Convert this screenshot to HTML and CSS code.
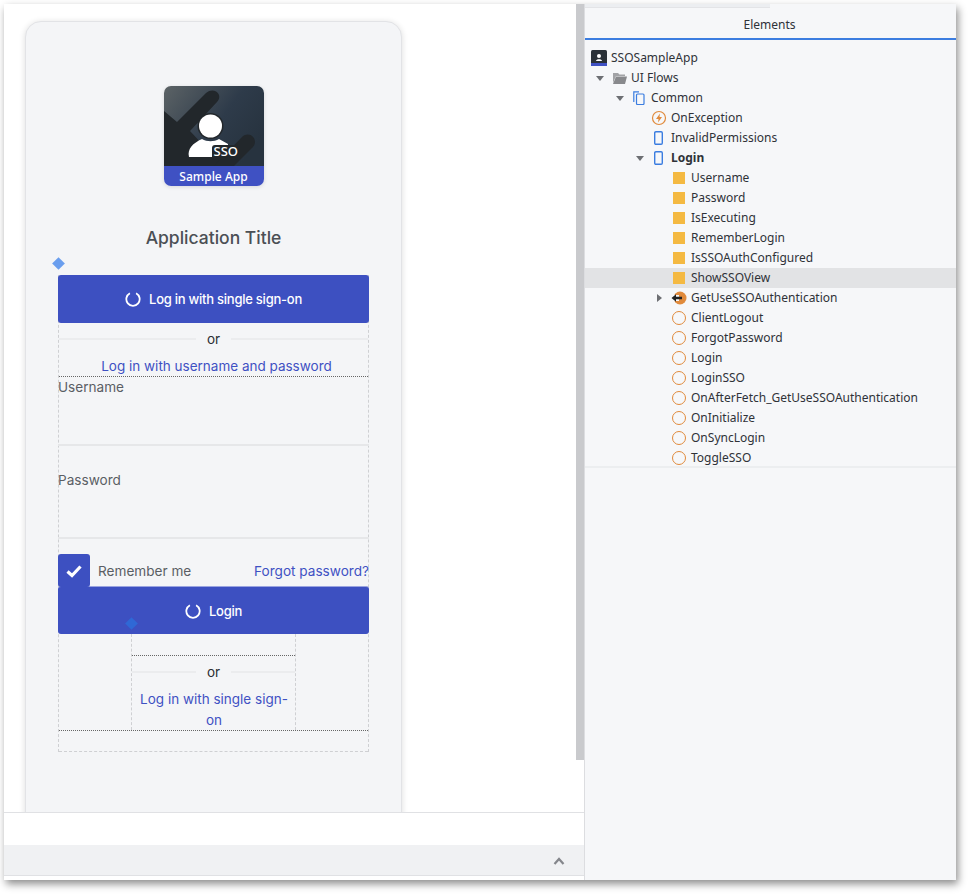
FILE: index.html
```html
<!DOCTYPE html>
<html lang="en">
<head>
  <meta charset="UTF-8" />
  <meta name="viewport" content="width=device-width, initial-scale=1.0" />
  <title>SSOSampleApp</title>
  <link rel="stylesheet" href="styles.css">
</head>
<body>
  <div class="window">
    <div class="editor">
      <div class="stage">
        <div class="canvas">
          <div class="card">
            <div class="logo">
              <svg class="logo-art" viewBox="0 0 100 80" width="100" height="80">
                <defs>
                  <linearGradient id="logoBg" x1="0" y1="0" x2="1" y2="0.6">
                    <stop offset="0" stop-color="#5c6366" />
                    <stop offset="0.6" stop-color="#2e3b4a" />
                    <stop offset="1" stop-color="#27333f" />
                  </linearGradient>
                </defs>
                <rect width="100" height="80" fill="url(#logoBg)" />
                <path d="M0 25 L13 36 L42 7 C50 0 60 9 53 16 L26 45 L40 60 L52 58 L62 80 L0 80 Z" fill="#22272b" />
                <path d="M50 80 L78 51 C86 44 95 54 89 61 L70 80 Z" fill="#22272b" />
                <circle cx="46.500" cy="40" r="13" fill="#22272b" />
                <circle cx="46.500" cy="40" r="11.500" fill="#fff" />
                <path d="M25 71 C23 63 29 57 38 53 C43 56 50 56 55 53 L64 58 L64 71 Z" fill="#fff" />
                <rect x="48" y="59" width="26" height="15" rx="3" fill="#22272b" />
              </svg>
              <span class="logo-sso">SSO</span>
              <div class="logo-band">Sample App</div>
            </div>
            <h1 class="app-title">Application Title</h1>
            <div class="form-area">
              <span class="handle handle-top"></span>
              <button class="btn">
                <svg class="spinner" viewBox="0 0 18 18" width="16" height="16"><path d="M5.500 2.500 A7.500 7.500 0 1 0 12.500 2.500" fill="none" stroke="#fff" stroke-width="2" /></svg>
                Log in with single sign-on
              </button>
              <div class="or"><span>or</span></div>
              <a class="link switch-link">Log in with username and password</a>
              <div class="fields">
                <div class="field">Username</div>
                <div class="field field-pass">Password</div>
                <div class="options">
                  <span class="check">
                    <svg viewBox="0 0 16 16" width="16" height="16"><path d="M1.500 8.500 L6 12.500 L14.500 3.500" fill="none" stroke="#fff" stroke-width="3.200" /></svg>
                  </span>
                  <span class="remember">Remember me</span>
                  <a class="link forgot">Forgot password?</a>
                </div>
                <button class="btn btn-login">
                  <svg class="spinner" viewBox="0 0 18 18" width="16" height="16"><path d="M5.500 2.500 A7.500 7.500 0 1 0 12.500 2.500" fill="none" stroke="#fff" stroke-width="2" /></svg>
                  Login
                </button>
                <div class="sso-box">
                  <span class="handle handle-sso"></span>
                  <div class="sso-gap"></div>
                  <div class="or or-small"><span>or</span></div>
                  <a class="link sso-link">Log in with single sign-on</a>
                </div>
                <div class="form-end"></div>
              </div>
            </div>
          </div>
        </div>
        <div class="scrollbar"></div>
      </div>
      <div class="footer-white"></div>
      <div class="footer-bar">
        <svg viewBox="0 0 12 8" width="12" height="8"><path d="M1.500 7 L6 2 L10.500 7" fill="none" stroke="#85878c" stroke-width="2.200" /></svg>
      </div>
    </div>

    <div class="side">
      <div class="side-strip"></div>
      <div class="side-head">Elements</div>
      <div class="tree">
        <div class="row lvl0">
          <span class="ic">
            <svg viewBox="0 0 16 16" width="16" height="16">
              <rect width="16" height="16" rx="1.500" fill="#2a3138" />
              <rect y="13" width="16" height="3" fill="#3f51c3" />
              <circle cx="8" cy="6" r="2" fill="#fff" />
              <path d="M5 11 C5 8.500 11 8.500 11 11 Z" fill="#fff" />
            </svg>
          </span>SSOSampleApp
        </div>
        <div class="row lvl1">
          <span class="arrow down"></span>
          <span class="ic">
            <svg class="ic-folder" viewBox="0 0 16 14" width="16" height="14">
              <path d="M1 12 V2 H6 L7.500 3.500 H13 V5 H4 Z" fill="#a2a3a6" />
              <path d="M1 13 L4 5.500 H15 L13 13 Z" fill="#88898c" />
            </svg>
          </span>UI Flows
        </div>
        <div class="row lvl2">
          <span class="arrow down"></span>
          <span class="ic">
            <svg class="ic-common" viewBox="0 0 12 14" width="12" height="14" fill="none" stroke="#3b7de0" stroke-width="1.200">
              <path d="M0.800 11 V0.800 H6" />
              <rect x="3.500" y="3" width="7.500" height="10.500" rx="1" />
            </svg>
          </span>Common
        </div>
        <div class="row lvl3">
          <span class="ic">
            <svg viewBox="0 0 16 16" width="16" height="16">
              <circle cx="8" cy="8" r="6.500" fill="none" stroke="#e08a3c" stroke-width="1.200" />
              <path d="M9 3.500 L5 9 H7.500 L7 12.500 L11 7 H8.500 Z" fill="#e08a3c" />
            </svg>
          </span>OnException
        </div>
        <div class="row lvl3">
          <span class="ic">
            <svg class="ic-phone" viewBox="0 0 9 14" width="9" height="14"><rect x="0.700" y="0.700" width="7.600" height="12.600" rx="1.200" fill="none" stroke="#3b7de0" stroke-width="1.400" /></svg>
          </span>InvalidPermissions
        </div>
        <div class="row lvl3 bold">
          <span class="arrow down"></span>
          <span class="ic">
            <svg class="ic-phone" viewBox="0 0 9 14" width="9" height="14"><rect x="0.700" y="0.700" width="7.600" height="12.600" rx="1.200" fill="none" stroke="#3b7de0" stroke-width="1.400" /></svg>
          </span>Login
        </div>
        <div class="row lvl4"><span class="ic"><i class="var"></i></span>Username</div>
        <div class="row lvl4"><span class="ic"><i class="var"></i></span>Password</div>
        <div class="row lvl4"><span class="ic"><i class="var"></i></span>IsExecuting</div>
        <div class="row lvl4"><span class="ic"><i class="var"></i></span>RememberLogin</div>
        <div class="row lvl4"><span class="ic"><i class="var"></i></span>IsSSOAuthConfigured</div>
        <div class="row lvl4 selected"><span class="ic"><i class="var"></i></span>ShowSSOView</div>
        <div class="row lvl4">
          <span class="arrow right"></span>
          <span class="ic">
            <svg viewBox="0 0 16 14" width="16" height="14">
              <circle cx="9" cy="7" r="6.500" fill="#e08a3c" />
              <rect x="0" y="4" width="8" height="6" fill="#f6f7f9" />
              <path d="M0.500 7 L5 3.200 V5.800 H11 V8.200 H5 V10.800 Z" fill="#222" />
            </svg>
          </span>GetUseSSOAuthentication
        </div>
        <div class="row lvl4"><span class="ic"><i class="action"></i></span>ClientLogout</div>
        <div class="row lvl4"><span class="ic"><i class="action"></i></span>ForgotPassword</div>
        <div class="row lvl4"><span class="ic"><i class="action"></i></span>Login</div>
        <div class="row lvl4"><span class="ic"><i class="action"></i></span>LoginSSO</div>
        <div class="row lvl4"><span class="ic"><i class="action"></i></span>OnAfterFetch_GetUseSSOAuthentication</div>
        <div class="row lvl4"><span class="ic"><i class="action"></i></span>OnInitialize</div>
        <div class="row lvl4"><span class="ic"><i class="action"></i></span>OnSyncLogin</div>
        <div class="row lvl4"><span class="ic"><i class="action"></i></span>ToggleSSO</div>
      </div>
    </div>
  </div>
</body>
</html>
```

FILE: styles.css
```css
body {
  margin: 0;
  min-height: 100vh;
  background-color: #fff;
  font-family: Inter, "Liberation Sans", sans-serif;
  color: #4b4f55;
}

.window {
  display: flex;
  width: 952px;
  height: 876px;
  margin: 4px 0 0 4px;
  background-color: #fff;
  box-shadow: 2px 4px 8px rgba(0,0,0,0.45);
}

/* left side: the screen canvas */
.editor {
  width: 580px;
  flex: none;
  display: flex;
  flex-direction: column;
}

.stage {
  display: flex;
  height: 808px;
  flex: none;
  overflow: hidden;
  border-bottom: 1px solid #e0e1e4;
}

.canvas {
  flex: 1;
  padding: 17px 0 0 21px;
}

.scrollbar {
  width: 8px;
  height: 756px;
  background-color: #c9cacd;
}

.footer-white {
  height: 32px;
  flex: none;
}

.footer-bar {
  display: flex;
  align-items: center;
  justify-content: flex-end;
  height: 28px;
  flex: none;
  padding: 2px 19px 0 0;
  background-color: #f0f1f3;
  border-bottom: 1px solid #e0e1e4;
}

.card {
  width: 377px;
  height: 900px;
  box-sizing: border-box;
  padding: 64px 32px 0;
  background-color: #f4f5f7;
  border: 1px solid #e2e3e6;
  border-radius: 16px;
  box-shadow: 0 1px 6px rgba(0,0,0,0.14);
}

.logo {
  position: relative;
  width: 100px;
  height: 100px;
  margin: 0 auto;
  border-radius: 7px;
  overflow: hidden;
  box-shadow: 0 1px 4px rgba(0,0,0,0.12);
}

.logo-art {
  display: block;
}

.logo-sso {
  position: absolute;
  left: 50px;
  top: 56px;
  font-family: "Noto Sans", sans-serif;
  font-size: 13px;
  font-weight: 500;
  color: #fff;
}

.logo-band {
  height: 20px;
  line-height: 22px;
  text-align: center;
  font-family: "Noto Sans", sans-serif;
  font-size: 12px;
  font-weight: 500;
  color: #fff;
  background-color: #3f51c3;
}

.app-title {
  margin: 41px 0 0;
  height: 22px;
  line-height: 22px;
  text-align: center;
  font-size: 17.500px;
  font-weight: 500;
  color: #4b4f55;
}

.form-area {
  position: relative;
  margin-top: 26px;
  border-left: 1px dashed #cfd0d3;
  border-right: 1px dashed #cfd0d3;
}

.handle {
  position: absolute;
  width: 9px;
  height: 9px;
  transform: rotate(45deg);
  background-color: #6a9eee;
}

.handle-top {
  left: -5px;
  top: -16px;
}

.handle-sso {
  left: -5px;
  top: -15px;
  background-color: #2f68d6;
}

.btn {
  display: flex;
  align-items: center;
  justify-content: center;
  gap: 8px;
  box-sizing: border-box;
  width: calc(100% + 2px);
  height: 48px;
  margin: 0 -1px;
  padding: 0;
  border: 0;
  border-radius: 3px;
  font-family: Inter, sans-serif;
  font-size: 13px;
  font-weight: 500;
  letter-spacing: -0.250px;
  color: #fff;
  background-color: #3d50c1;
}

.or {
  display: flex;
  align-items: center;
  height: 17px;
  margin-top: 7px;
  font-size: 13.500px;
  color: #2c2f33;
}

.or span {
  padding: 0 11px;
}

.or::before,
.or::after {
  content: "";
  flex: 1;
  height: 2px;
  background-color: #ebecee;
}

.link {
  display: block;
  font-size: 13.500px;
  color: #3f51c3;
  text-align: center;
}

.switch-link {
  height: 30px;
  line-height: 20px;
  padding: 9px 0 0 6px;
  box-sizing: border-box;
  border-bottom: 1px dotted #666;
}

.field {
  height: 67px;
  line-height: 20px;
  font-size: 13.600px;
  color: #5a5e64;
  border-bottom: 2px solid #e6e7e9;
  margin: 0 -1px;
}

.field-pass {
  padding-top: 24px;
}

.options {
  display: flex;
  align-items: center;
  height: 33px;
  margin-top: 15px;
  font-size: 13.600px;
}

.check {
  display: flex;
  align-items: center;
  justify-content: center;
  width: 32px;
  height: 33px;
  margin-left: -1px;
  border-radius: 3px;
  background-color: #3d50c1;
}

.remember {
  margin-left: 8px;
  color: #5a5e64;
}

.forgot {
  margin-left: auto;
  margin-right: -1px;
  font-size: 13.600px;
}

.btn-login {
  margin-top: -1px;
  border-top: 1px solid #9aa4e0;
}

.sso-box {
  position: relative;
  width: 165px;
  height: 96px;
  margin: 0 auto;
  box-sizing: border-box;
  border-left: 1px dashed #cfd0d3;
  border-right: 1px dashed #cfd0d3;
}

.sso-gap {
  height: 21px;
  border-bottom: 1px dotted #666;
}

.sso-link {
  padding: 9px 0 0 1px;
  line-height: 21px;
}

.form-end {
  height: 20px;
  border-top: 1px dotted #666;
  border-bottom: 1px dashed #cfd0d3;
}

/* right side: the elements tree */
.side {
  flex: 1;
  border-left: 1px solid #dcdde0;
  background-color: #f6f7f9;
  font-family: "Noto Sans", sans-serif;
  font-size: 12px;
  color: #2f3238;
}

.side-strip {
  width: 185px;
  height: 4px;
  background-color: #eceef1;
  border-bottom: 1px solid #e3e4e7;
  box-sizing: border-box;
}

.side-head {
  height: 32px;
  line-height: 33px;
  padding-right: 2px;
  text-align: center;
  border-bottom: 2px solid #3b7de0;
  box-sizing: border-box;
}

.tree {
  height: 418px;
  padding: 8px 0 0;
  border-bottom: 2px solid #eceef0;
}

.row {
  display: flex;
  align-items: center;
  height: 20px;
  line-height: 20px;
  white-space: nowrap;
}

.lvl0 { padding-left: 6px; }
.lvl1 { padding-left: 26px; }
.lvl2 { padding-left: 46px; }
.lvl3 { padding-left: 66px; }
.lvl4 { padding-left: 86px; }

.selected {
  background-color: #e2e3e5;
}

.bold {
  font-weight: 700;
}

.ic {
  display: flex;
  align-items: center;
  width: 20px;
  flex: none;
}

.ic-phone {
  margin-left: 3px;
}

.ic-folder {
  margin-left: 1px;
}

.ic-common {
  margin-left: 2px;
}

.arrow {
  width: 0;
  height: 0;
  flex: none;
}

.arrow.down {
  margin-left: -15px;
  margin-right: 7px;
  border-left: 4px solid transparent;
  border-right: 4px solid transparent;
  border-top: 5px solid #6d6f73;
}

.arrow.right {
  margin-left: -14px;
  margin-right: 9px;
  border-top: 4px solid transparent;
  border-bottom: 4px solid transparent;
  border-left: 5px solid #6d6f73;
}

.var {
  display: block;
  width: 12px;
  height: 12px;
  margin-left: 2px;
  background-color: #f4b942;
}

.action {
  display: block;
  width: 12px;
  height: 12px;
  margin-left: 1px;
  border: 1px solid #e08a3c;
  border-radius: 50%;
}
```
